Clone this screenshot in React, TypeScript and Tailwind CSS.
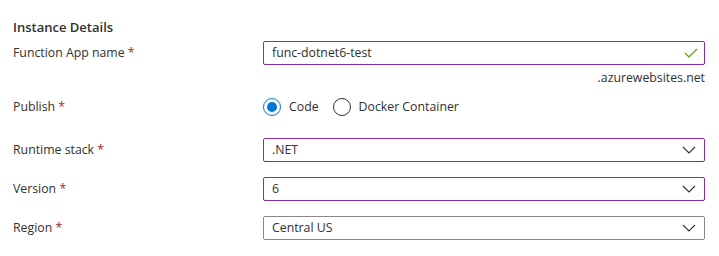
import { useState } from 'react'

const font = { fontFamily: '"Segoe UI", "Open Sans", "Noto Sans", sans-serif' }

function Label({ text }: { text: string }) {
    return (
        <div className="w-[250px] shrink-0 text-[12.3px] text-[#323130]">
            {text} <span className="text-[#a4262c]">*</span>
        </div>
    )
}

function Chevron() {
    return (
        <svg width="14" height="8" viewBox="0 0 14 8" fill="none" className="shrink-0">
            <path d="M1 1 L7 7 L13 1" stroke="#323130" strokeWidth="1.1" />
        </svg>
    )
}

function Dropdown({ value, active }: { value: string; active?: boolean }) {
    return (
        <div
            className={
                "flex-1 h-[24px] flex items-center justify-between pl-[8px] pr-[8px] rounded-[2px] border bg-white " +
                (active ? "border-[#8a2da5]" : "border-[#8a8886]")
            }
        >
            <span className="text-[12.3px] text-[#323130]">{value}</span>
            <Chevron />
        </div>
    )
}

function Radio({ label, checked, onClick }: { label: string; checked: boolean; onClick: () => void }) {
    return (
        <button className="flex items-center gap-[8px] cursor-pointer" onClick={onClick}>
            <span
                className={
                    "w-[18px] h-[18px] rounded-full border flex items-center justify-center " +
                    (checked ? "border-[#0078d4]" : "border-[#323130]")
                }
            >
                {checked && <span className="w-[10px] h-[10px] rounded-full bg-[#0078d4]" />}
            </span>
            <span className="text-[12.3px] text-[#323130]">{label}</span>
        </button>
    )
}

export default function App() {
    const [publish, setPublish] = useState('code')
    return (
        <div className="w-[719px] h-[256px] bg-white pl-[13px] pr-[14px] pt-[18px]" style={font}>
            <h2 className="h-[18px] leading-[18px] text-[13px] font-semibold text-[#323130]">Instance Details</h2>

            <div className="mt-[5px] flex items-center">
                <Label text="Function App name" />
                <div className="flex-1 h-[24px] flex items-center justify-between pl-[8px] pr-[6px] rounded-[2px] border border-[#8a2da5] bg-white">
                    <span className="text-[12.3px] text-[#323130]">func-dotnet6-test</span>
                    <svg width="14" height="10" viewBox="0 0 14 10" fill="none">
                        <path d="M1 5 L5 9 L13 1" stroke="#57a300" strokeWidth="1.2" />
                    </svg>
                </div>
            </div>
            <div className="mt-[5px] h-[16px] leading-[16px] text-right text-[12.3px] text-[#323130]">.azurewebsites.net</div>

            <div className="mt-[11px] h-[20px] flex items-center">
                <Label text="Publish" />
                <div className="flex items-center gap-[14px]">
                    <Radio label="Code" checked={publish === 'code'} onClick={() => setPublish('code')} />
                    <Radio label="Docker Container" checked={publish === 'docker'} onClick={() => setPublish('docker')} />
                </div>
            </div>

            <div className="mt-[21px] flex items-center">
                <Label text="Runtime stack" />
                <Dropdown value=".NET" active />
            </div>
            <div className="mt-[15px] flex items-center">
                <Label text="Version" />
                <Dropdown value="6" active />
            </div>
            <div className="mt-[15px] flex items-center">
                <Label text="Region" />
                <Dropdown value="Central US" />
            </div>
        </div>
    )
}
